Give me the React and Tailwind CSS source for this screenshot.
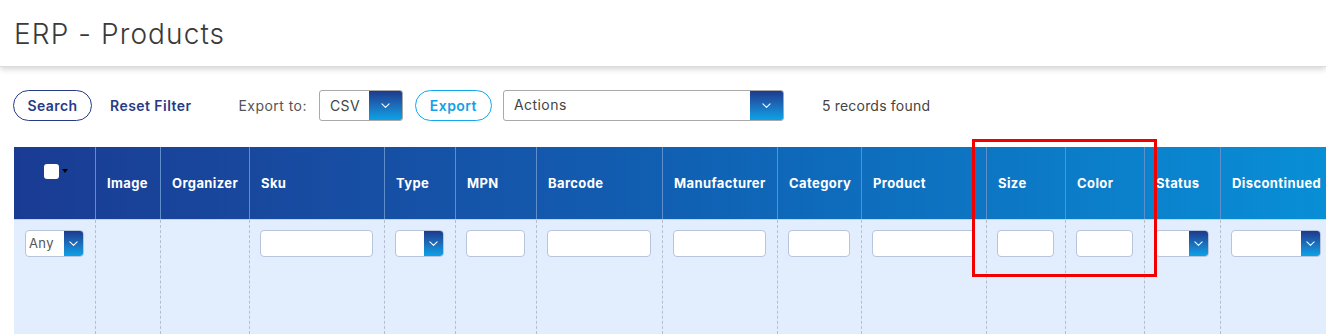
import React from "react";

const cols = [
  { w: 81, label: "", kind: "check" },
  { w: 65, label: "Image", kind: "none" },
  { w: 89, label: "Organizer", kind: "none" },
  { w: 135, label: "Sku", kind: "input" },
  { w: 71, label: "Type", kind: "select" },
  { w: 81, label: "MPN", kind: "input" },
  { w: 126, label: "Barcode", kind: "input" },
  { w: 115, label: "Manufacturer", kind: "input" },
  { w: 84, label: "Category", kind: "input" },
  { w: 125, label: "Product", kind: "input" },
  { w: 79, label: "Size", kind: "input" },
  { w: 79, label: "Color", kind: "input" },
  { w: 76, label: "Status", kind: "select" },
  { w: 112, label: "Discontinued", kind: "select" },
];

const font = { fontFamily: "Inter, 'Noto Sans', sans-serif" };

function Chevron({ size = 10 }) {
  return (
    <svg width={size} height={size * 0.6} viewBox="0 0 10 6" fill="none">
      <path d="M1 1l4 4 4-4" stroke="white" strokeWidth="1.2" strokeLinecap="round" strokeLinejoin="round" />
    </svg>
  );
}

function ArrowBox({ w }) {
  return (
    <div
      className="h-full flex items-center justify-center bg-gradient-to-b from-[#1d3a8e] to-[#09a2e8]"
      style={{ width: w }}
    >
      <Chevron size={9} />
    </div>
  );
}

export default function App() {
  return (
    <div className="w-[1326px] h-[334px] overflow-hidden bg-white relative" style={font}>
      <div className="h-[67px] bg-white shadow-[0_2px_6px_rgba(0,0,0,0.18)] border-b border-[#dcdcdc] flex items-center pl-[14px] relative z-10">
        <h1 className="text-[28px] font-light text-[#3a3a3a] tracking-[1.1px] leading-none mt-[2px]">ERP - Products</h1>
      </div>

      <div className="flex items-center h-[31px] mt-[23px] pl-[13px] text-[14px] tracking-[0.45px]">
        <button className="h-[31px] w-[79px] rounded-full border-[1.5px] border-[#273a86] text-[#273a86] font-semibold">
          Search
        </button>
        <span className="ml-[18px] text-[#273a86] font-semibold">Reset Filter</span>
        <span className="ml-[47px] text-[#555]">Export to:</span>
        <div className="ml-[12px] h-[31px] w-[84px] flex rounded-[3px] border border-[#a9a9a9] overflow-hidden">
          <div className="flex-1 flex items-center pl-[10px] text-[#444]">CSV</div>
          <ArrowBox w={33} />
        </div>
        <button className="ml-[12px] h-[31px] w-[77px] rounded-full border-[1.5px] border-[#13a7ec] text-[#13a0e6] font-semibold">
          Export
        </button>
        <div className="ml-[11px] h-[31px] w-[281px] flex rounded-[3px] border border-[#a9a9a9] overflow-hidden">
          <div className="flex-1 flex items-center pl-[10px] text-[#444] -mt-[2px]">Actions</div>
          <ArrowBox w={33} />
        </div>
        <span className="ml-[38px] text-[#444] tracking-[0.2px]">5 records found</span>
      </div>

      <div className="mt-[26px] ml-[14px] w-[1330px]">
        <div className="flex h-[72px] bg-gradient-to-r from-[#1a3b93] via-[#1060b3] to-[#0890d7] text-white text-[13px] font-bold tracking-[0.4px]">
          {cols.map((c, i) => (
            <div
              key={i}
              className={`shrink-0 h-full ${i > 0 ? "border-l border-[#5f8fcb]" : ""} ${
                c.kind === "check" ? "flex justify-center pt-[17px]" : "flex items-center pl-[11px] pt-[2px]"
              }`}
              style={{ width: c.w }}
            >
              {c.kind === "check" ? (
                <div className="flex items-start gap-[3px] ml-[3px]">
                  <div className="w-[15px] h-[15px] rounded-[3px] bg-white" />
                  <div className="mt-[5px] w-0 h-0 border-l-[3.5px] border-r-[3.5px] border-t-[4px] border-l-transparent border-r-transparent border-t-black" />
                </div>
              ) : (
                c.label
              )}
            </div>
          ))}
        </div>
        <div className="flex h-[120px] bg-[#e2eefd] border-t border-[#c3d3ea]">
          {cols.map((c, i) => (
            <div
              key={i}
              className={`shrink-0 h-full pt-[10px] pr-[11px] ${
                i > 0 ? "pl-[10px] border-l border-dashed border-[#b3bfd1]" : "pl-[11px]"
              }`}
              style={{ width: c.w }}
            >
              {c.kind === "input" && (
                <div className="h-[27px] w-full bg-white rounded-[4px] border border-[#b7c5dc]" />
              )}
              {(c.kind === "select" || c.kind === "check") && (
                <div className="h-[27px] w-full bg-white rounded-[4px] border border-[#b7c5dc] flex overflow-hidden">
                  <div className="flex-1 flex items-center pl-[3px] text-[13px] text-[#555] tracking-[0.4px]">
                    {c.kind === "check" ? "Any" : ""}
                  </div>
                  <ArrowBox w={19} />
                </div>
              )}
            </div>
          ))}
        </div>
      </div>

      <div className="absolute left-[972px] top-[139px] w-[185px] h-[138px] border-[3px] border-[#f20000] z-20" />
    </div>
  );
}
